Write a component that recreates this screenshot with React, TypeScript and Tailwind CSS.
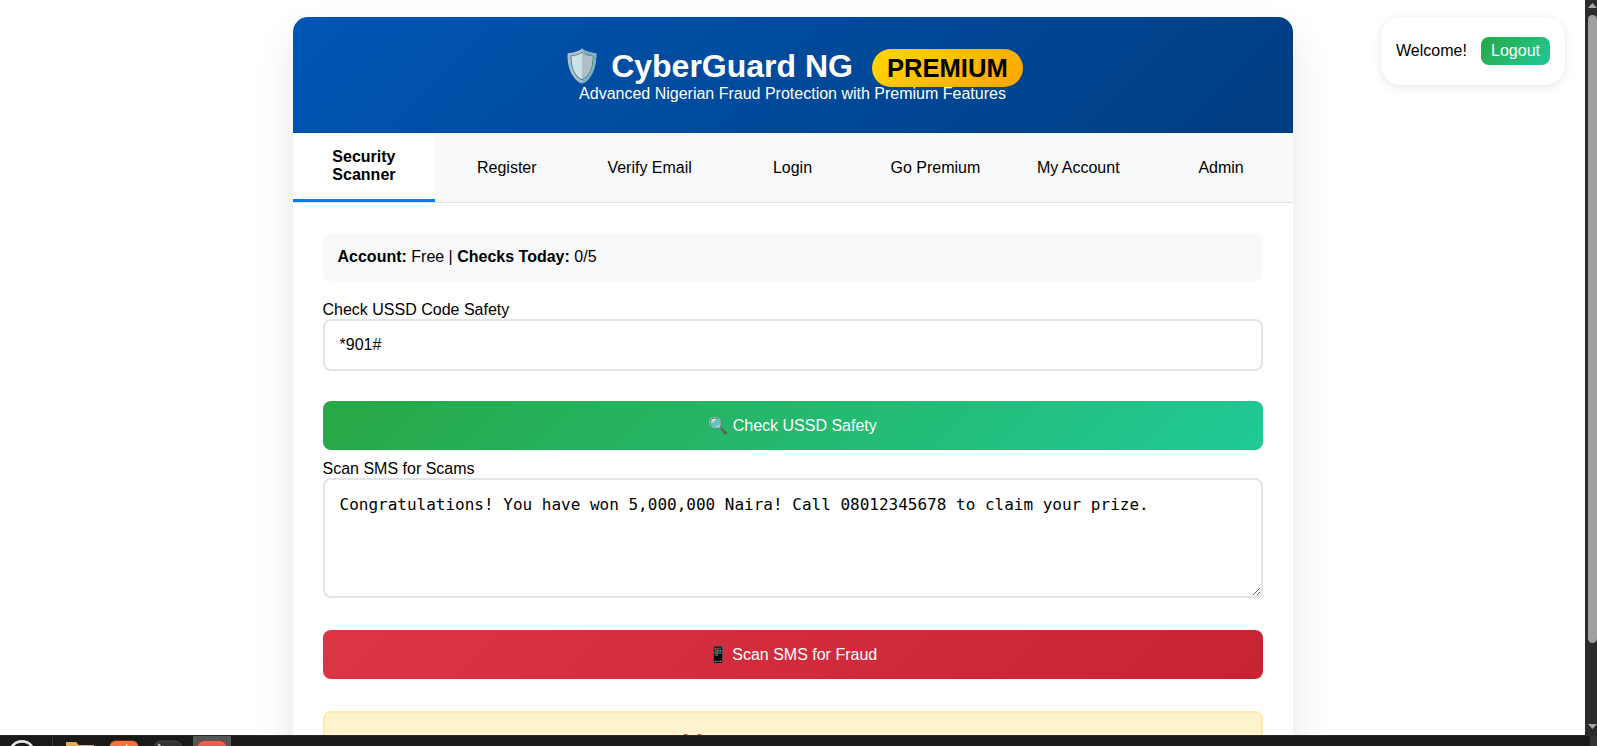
const TABS = ["Security Scanner", "Register", "Verify Email", "Login", "Go Premium", "My Account", "Admin"];

function Header() {
  return (
    <header className="flex h-[116px] shrink-0 flex-col items-center rounded-t-[15px] bg-[linear-gradient(135deg,#0056b3,#003d82)] pt-[31px] text-white">
      <h1 className="h-[37px] text-[32px] leading-[37px] font-bold whitespace-nowrap">
        🛡️ CyberGuard NG{" "}
        <span className="ml-[10px] inline-block rounded-[20px] bg-[linear-gradient(135deg,#ffd700,#ffa500)] px-[15px] py-[5px] text-[25.6px] leading-[28px] text-black">
          PREMIUM
        </span>
      </h1>
      <p className="relative leading-[18px]">Advanced Nigerian Fraud Protection with Premium Features</p>
    </header>
  );
}

function Tabs() {
  return (
    <nav className="flex h-[70px] shrink-0 border-b border-[#dee2e6] bg-[#f8f9fa]">
      {TABS.map((tab, i) => (
        <button
          key={tab}
          className={
            i === 0
              ? "flex-1 basis-0 border-b-[3px] border-[#007bff] bg-white px-[15px] leading-[18px] font-bold"
              : "flex-1 basis-0 px-[15px] leading-[18px]"
          }
        >
          {tab}
        </button>
      ))}
    </nav>
  );
}

function Scanner() {
  return (
    <main className="flex flex-col p-[30px]">
      <div className="rounded-lg bg-[#f8f9fa] p-[15px] leading-[18px]">
        <strong>Account:</strong> Free | <strong>Checks Today:</strong> 0/5
      </div>

      <label htmlFor="ussd" className="mt-5 leading-[18px]">
        Check USSD Code Safety
      </label>
      <input
        id="ussd"
        defaultValue="*901#"
        className="h-[52px] rounded-lg border-2 border-[#e1e5e9] bg-white px-[15px]"
      />
      <button className="mt-[30px] h-[49px] rounded-lg bg-[linear-gradient(135deg,#28a745,#20c997)] text-white">
        🔍 Check USSD Safety
      </button>

      <label htmlFor="sms" className="mt-[10px] leading-[18px]">
        Scan SMS for Scams
      </label>
      <textarea
        id="sms"
        defaultValue="Congratulations! You have won 5,000,000 Naira! Call 08012345678 to claim your prize."
        className="h-[120px] resize-y rounded-lg border-2 border-[#e1e5e9] bg-white p-[15px] font-['DejaVu_Sans_Mono',monospace] leading-[19px]"
      />
      <button className="mt-8 h-[49px] rounded-lg bg-[linear-gradient(135deg,#dc3545,#c82333)] text-white">
        📱 Scan SMS for Fraud
      </button>

      <div className="mt-8 h-[200px] rounded-lg border-2 border-[#ffeaa7] bg-[#fff3cd] pt-[21px] pl-[358px]">
        <svg width="20" height="20" viewBox="0 0 20 20">
          <path d="M1 0 H4 L10 7 L15 0 H18 L19 2 L12 10 L19 18 L17 20 L10 13 L3 20 L1 18 L8 10 L0 2 Z" fill="#f44336" />
        </svg>
      </div>
    </main>
  );
}

function UserPanel() {
  return (
    <div className="absolute top-[17px] right-[32px] flex h-[68px] w-[184px] items-center justify-between rounded-[20px] bg-white px-[15px] shadow-[0_2px_10px_rgba(0,0,0,0.1)]">
      <span>Welcome!</span>
      <button className="h-7 rounded-lg bg-[linear-gradient(135deg,#28a745,#20c997)] px-[10px] text-white">Logout</button>
    </div>
  );
}

function Scrollbar() {
  return (
    <div className="flex w-3 shrink-0 flex-col items-end bg-[#2b2b2b]">
      <svg width="9" height="15" viewBox="0 0 9 15">
        <path d="M0 8 L4.5 3 L9 8 Z" fill="#a8a8a8" />
      </svg>
      <div className="h-[628px] w-[9px] rounded-full bg-[#9f9f9f]" />
      <svg className="mt-auto" width="9" height="11" viewBox="0 0 9 11">
        <path d="M0 0 L9 0 L4.5 5 Z" fill="#a8a8a8" />
      </svg>
    </div>
  );
}

function Taskbar() {
  return (
    <footer className="h-[11px] shrink-0 overflow-hidden border-t border-[#2a2a2a] bg-[#191919]">
      <svg width="1597" height="10" viewBox="0 0 1597 10">
        <circle cx="22" cy="18" r="12.6" fill="none" stroke="#e4e4e4" strokeWidth="2.6" />
        <path d="M52.5 5 V10" stroke="#3a3a3a" />
        <path d="M52.5 1 V10" stroke="#3a3a3a" />
        {/* file manager */}
        <path d="M66 10 V6 H76 L79 9 H94 V10 Z" fill="#e5a94e" />
        {/* browser */}
        <rect x="109.5" y="4.5" width="29" height="20" rx="6" fill="#8a4a2c" />
        <rect x="110" y="5" width="28" height="20" rx="6" fill="#ff7139" />
        <path d="M125 10 L127.5 8 V10 Z" fill="#ffe6da" />
        {/* terminal */}
        <rect x="154.5" y="5" width="27" height="20" rx="6" fill="#333" stroke="#484848" />
        <path d="M158 8 L160.5 10" stroke="#ddd" strokeWidth="1.5" />
        {/* active window */}
        <rect x="193" width="38" height="10" fill="#555" />
        <rect x="197.5" y="4.5" width="29" height="20" rx="6" fill="#8f3a35" />
        <rect x="198" y="5" width="28" height="20" rx="6" fill="#f05c50" />
        <rect x="1590" width="7" height="10" fill="#333" />
      </svg>
    </footer>
  );
}

export default function App() {
  return (
    <div className="relative flex h-[746px] w-[1597px] flex-col overflow-hidden bg-white font-['Liberation_Sans',Arial,sans-serif] text-base text-black">
      <div className="flex min-h-0 flex-1">
        <div className="flex flex-1 items-start justify-center overflow-hidden pt-[17px]">
          <div className="flex w-[1000px] flex-col rounded-[15px] bg-white shadow-[0_20px_40px_rgba(0,0,0,0.1)]">
            <Header />
            <Tabs />
            <Scanner />
          </div>
        </div>
        <Scrollbar />
      </div>
      <UserPanel />
      <Taskbar />
    </div>
  );
}
